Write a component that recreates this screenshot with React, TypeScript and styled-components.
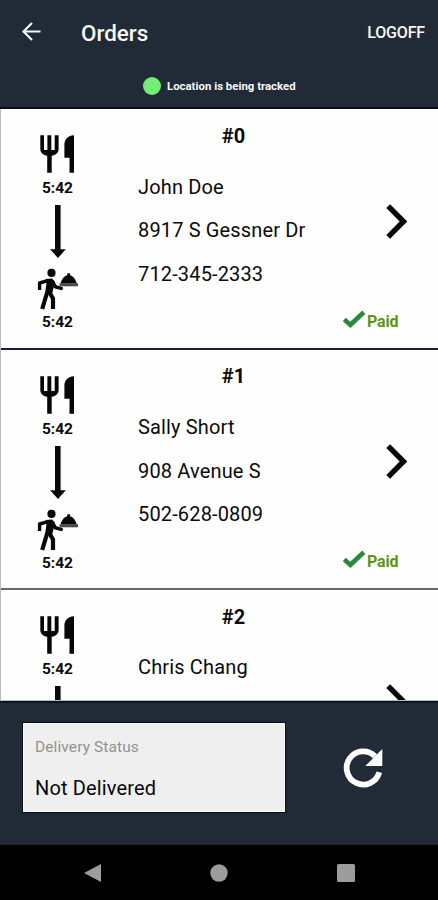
import React from "react";
import styled, { createGlobalStyle } from "styled-components";

const GlobalStyle = createGlobalStyle`
  * { box-sizing: border-box; }
  body { margin: 0; font-family: Roboto, sans-serif; background: #000; }
  button { font: inherit; color: inherit; background: none; border: 0; padding: 0; }
  svg { display: block; }
`;

const Screen = styled.div`
  width: 438px;
  height: 900px;
  overflow: hidden;
  display: flex;
  flex-direction: column;
`;

const Header = styled.header`
  height: 109px;
  flex: none;
  background: #212a37;
  border-bottom: 2px solid #080d22;
  color: #f7f8fa;
`;

const TitleBar = styled.div`
  height: 65px;
  display: flex;
  align-items: center;
  padding: 0 13px 0 22px;
`;

const BackButton = styled.button`
  margin-top: -2px;
`;

const Title = styled.h1`
  flex: 1;
  margin: 0 0 0 40px;
  font-size: 22.4px;
  font-weight: 500;
  line-height: 28px;
`;

const LogoffButton = styled.button`
  && { font-size: 16px; font-weight: 500; line-height: 20px; letter-spacing: -0.15px; }
`;

const Tracking = styled.div`
  display: flex;
  align-items: center;
  padding-left: 143px;
  gap: 6px;
  height: 42px;
  font-size: 11.4px;
  font-weight: 700;
`;

const Dot = styled.span`
  width: 18px;
  height: 18px;
  border-radius: 50%;
  background: #75ec78;
`;

const OrderList = styled.main`
  height: 592px;
  flex: none;
  overflow: hidden;
  padding-top: 0.6px;
  background: #fefefe;
  border-left: 1px solid #b9babd;
  border-bottom: 1px solid #b3b7b8;
`;

const Card = styled.article<{ $line: string }>`
  height: 240.4px;
  display: grid;
  grid-template-columns: 112px 190px 1fr;
  border-bottom: 2px solid ${(p) => p.$line};
  color: #0b0b0b;
`;

const Timeline = styled.div`
  display: flex;
  flex-direction: column;
  align-items: center;
  padding: 25.6px 0 0 1px;
`;

const Time = styled.span<{ $gap: number }>`
  margin-top: ${(p) => p.$gap}px;
  height: 18px;
  line-height: 18px;
  font-size: 15.5px;
  font-weight: 700;
`;

const ArrowSlot = styled.div`
  margin: 8px 0 10px;
`;

const Details = styled.div`
  padding: 12.4px 0 0 25px;
  display: flex;
  flex-direction: column;
`;

const OrderNumber = styled.h2`
  margin: 0 0 15.6px;
  padding-left: 26px;
  text-align: center;
  font-size: 20px;
  font-weight: 700;
  line-height: 28px;
`;

const Line = styled.p`
  margin: 0;
  font-size: 20px;
  line-height: 43.7px;
  letter-spacing: 0.15px;
  white-space: nowrap;
`;

const Aside = styled.div`
  display: flex;
  flex-direction: column;
  justify-content: space-between;
  padding: 94px 0 15px 40px;
`;

const OpenSlot = styled.button`
  align-self: flex-start;
  margin-left: 43px;
`;

const Paid = styled.span`
  display: flex;
  align-items: flex-start;
  gap: 1px;
  color: #5e9410;
  font-size: 16px;
  line-height: 23px;
  font-weight: 700;
  letter-spacing: -0.2px;
`;

const Footer = styled.footer`
  height: 144px;
  flex: none;
  display: flex;
  align-items: flex-start;
  padding: 19px 0 0 22px;
  background: #212a37;
  border-top: 2px solid #0b1428;
`;

const StatusField = styled.div`
  width: 264px;
  height: 91px;
  padding: 14px 12px;
  background: #efefef;
  border: 1px solid #080d1b;
  box-shadow: inset 0 0 0 1px #f8f8f8;
`;

const FieldLabel = styled.div`
  font-size: 15.5px;
  line-height: 20px;
  letter-spacing: 0.1px;
  color: #929292;
`;

const FieldValue = styled.div`
  margin-top: 17px;
  font-size: 20px;
  line-height: 28px;
  letter-spacing: 0.15px;
  color: #080808;
`;

const RefreshButton = styled.button`
  margin: 26px 0 0 57px;
`;

const NavBar = styled.nav`
  height: 55px;
  flex: none;
  display: flex;
  align-items: center;
  padding: 0 83px 0 84px;
  justify-content: space-between;
  background: #000;
`;

const BackArrow = () => (
  <svg width="19" height="19" viewBox="0 0 19 19" fill="none" stroke="#f5f6f8" strokeWidth="2.2">
    <path d="M18.5 9.5H2M10 1 1.5 9.5 10 18" />
  </svg>
);

const Cutlery = () => (
  <svg width="35" height="38" viewBox="0 0 35 38">
    <path
      fill="#060606"
      d="M0.3 0.2H4V15H7.4V0.2H11.3V15H14.7V0.2H18.6V14C18.6 17.5 16 20 11.7 20.8V37.8H7.2V20.8C3 20 0.3 17.5 0.3 14ZM34 0.2V37.8H29.5V22.8H24.4V10C24.4 4 28 0.6 34 0.2Z"
    />
  </svg>
);

const DownArrow = () => (
  <svg width="18" height="53" viewBox="0 0 18 53">
    <path fill="#080808" d="M6 0H11.6V44.3H16.8L9 53 1.1 44.3H6Z" />
  </svg>
);

const Waiter = () => (
  <svg width="42" height="42" viewBox="0 0 42 42">
    <circle cx="14.5" cy="4.9" r="4.1" fill="#080808" />
    <path d="M8.5 11 15 10.5 18 14 15.2 25.5 8 26 9.5 15Z" fill="#080808" />
    <g fill="none" stroke="#080808" strokeLinejoin="round">
      <path d="M11 12.6 2.6 15V22" strokeWidth="3.4" />
      <path d="M15.5 13.5 18.3 18.8 24.3 20.4" strokeWidth="3.5" strokeLinecap="round" />
      <path d="M10.3 24 5.2 41" strokeWidth="4.2" />
      <path d="M12 23.5 16 30.5V41" strokeWidth="4.2" />
    </g>
    <path fill="#080808" d="M23.6 15.5C24.8 10.6 27.6 8 30.3 7.3V5.3H33V7.3C35.7 8 38.5 10.6 39.7 15.5Z" />
    <path fill="#4b4b4b" d="M22.6 15.2H41V18.3H22.6Z" />
  </svg>
);

const Chevron = () => (
  <svg width="22" height="35" viewBox="0 0 22 35" fill="none" stroke="#050505" strokeWidth="5.4">
    <path d="M2.2 2.2 17.5 17.5 2.2 32.8" />
  </svg>
);

const Check = () => (
  <svg width="23" height="19" viewBox="0 0 23 19" fill="none" stroke="#2b8a3e" strokeWidth="4.6">
    <path d="M1.2 9.5 7.4 14.8 20.8 2.2" />
  </svg>
);

const Refresh = () => (
  <svg width="41" height="40" viewBox="0 0 41 40">
    <path d="M36.3 24.3A16.6 16.6 0 1 1 32 8.2" fill="none" stroke="#fff" strokeWidth="5.8" />
    <path d="M39.3 1V18H22.3Z" fill="#fff" />
  </svg>
);

type Order = {
  name: string;
  line: string;
  contact?: string[];
  dropOff?: string;
  paid?: boolean;
};

const orders: Order[] = [
  { name: "John Doe", contact: ["8917 S Gessner Dr", "712-345-2333"], dropOff: "5:42", paid: true, line: "#1c1b3c" },
  { name: "Sally Short", contact: ["908 Avenue S", "502-628-0809"], dropOff: "5:42", paid: true, line: "#66666b" },
  { name: "Chris Chang", line: "#66666b" },
];

export default function App() {
  return (
    <Screen>
      <GlobalStyle />
      <Header>
        <TitleBar>
          <BackButton aria-label="Back"><BackArrow /></BackButton>
          <Title>Orders</Title>
          <LogoffButton>LOGOFF</LogoffButton>
        </TitleBar>
        <Tracking><Dot />Location is being tracked</Tracking>
      </Header>
      <OrderList>
        {orders.map((order, i) => (
          <Card key={order.name} $line={order.line}>
            <Timeline>
              <Cutlery />
              <Time $gap={6}>5:42</Time>
              <ArrowSlot><DownArrow /></ArrowSlot>
              {order.dropOff && (
                <>
                  <Waiter />
                  <Time $gap={3}>{order.dropOff}</Time>
                </>
              )}
            </Timeline>
            <Details>
              <OrderNumber>#{i}</OrderNumber>
              <Line>{order.name}</Line>
              {order.contact?.map((text) => <Line key={text}>{text}</Line>)}
            </Details>
            <Aside>
              <OpenSlot aria-label="Open order"><Chevron /></OpenSlot>
              {order.paid && <Paid><Check />Paid</Paid>}
            </Aside>
          </Card>
        ))}
      </OrderList>
      <Footer>
        <StatusField>
          <FieldLabel>Delivery Status</FieldLabel>
          <FieldValue>Not Delivered</FieldValue>
        </StatusField>
        <RefreshButton aria-label="Refresh"><Refresh /></RefreshButton>
      </Footer>
      <NavBar>
        <svg width="17" height="20" viewBox="0 0 17 20"><path d="M0 10 17 1V19Z" fill="#9d9d9d" /></svg>
        <svg width="18" height="18" viewBox="0 0 18 18"><circle cx="9" cy="9" r="8.7" fill="#9d9d9d" /></svg>
        <svg width="18" height="18" viewBox="0 0 18 18"><rect width="18" height="18" rx="1.5" fill="#9d9d9d" /></svg>
      </NavBar>
    </Screen>
  );
}
